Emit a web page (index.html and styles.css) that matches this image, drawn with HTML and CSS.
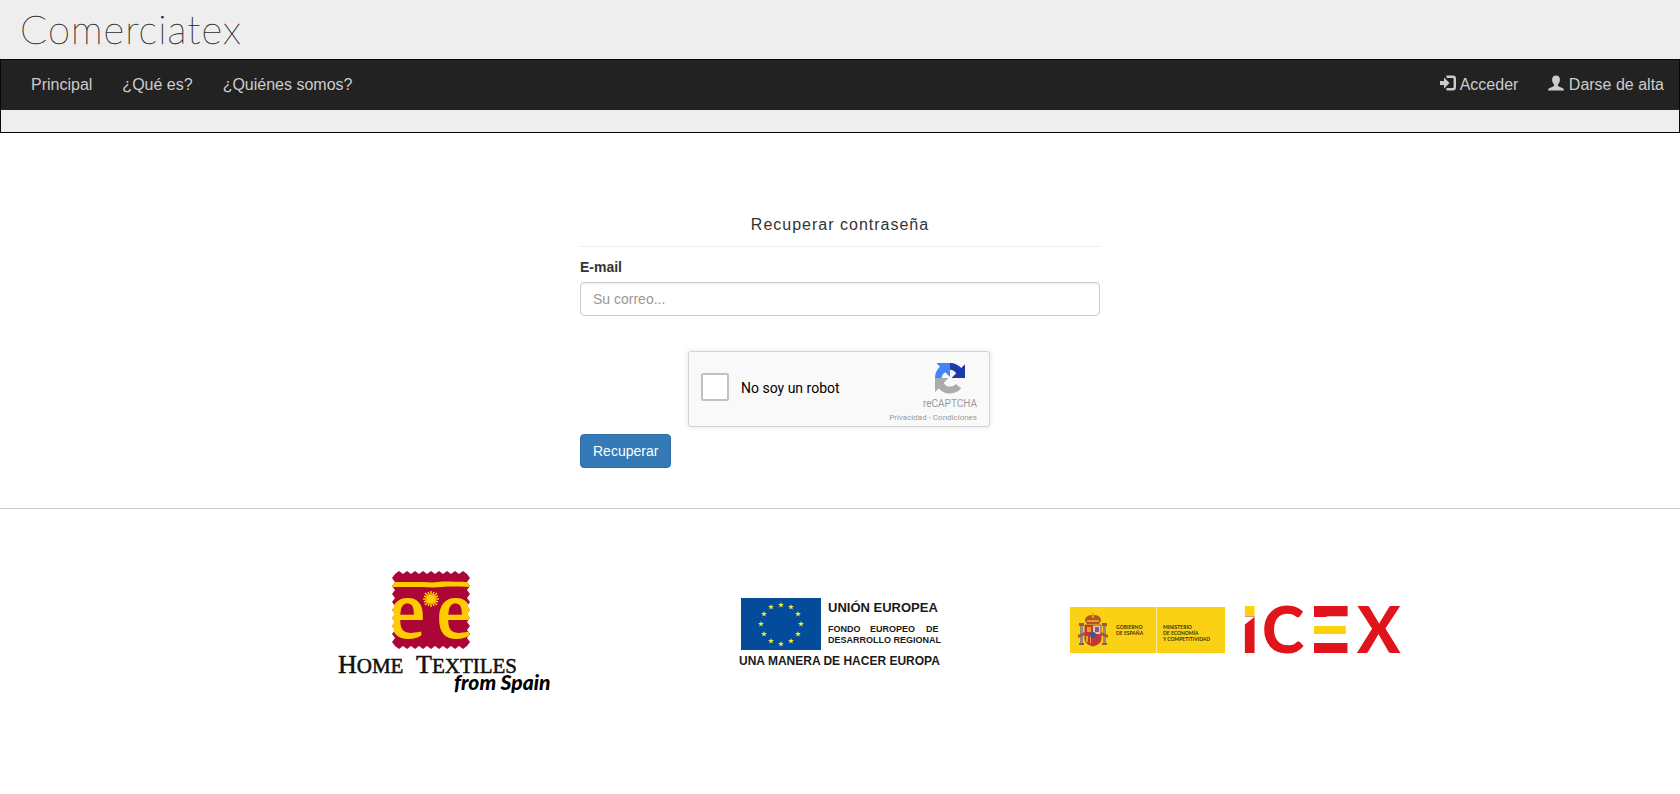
FILE: index.html
```html
<!DOCTYPE html>
<html lang="es">
<head>
    <meta charset="UTF-8">
    <meta name="viewport" content="width=device-width, initial-scale=1.0">
    <title>Comerciatex</title>
    <link rel="stylesheet" href="styles.css">
</head>
<body>
    <header class="cabecera">
        <h1 class="titulo">Comerciatex</h1>
        <div class="menu">
            <nav class="navbar">
                <div class="nav-links">
                    <a href="#">Principal</a>
                    <a href="#">¿Qué es?</a>
                    <a href="#">¿Quiénes somos?</a>
                </div>
                <div class="nav-links">
                    <a href="#"><svg class="icono" viewBox="0 0 16 16" aria-hidden="true">
                        <path fill="currentColor" d="M0 6h4V2.500L9.500 8 4 13.500V10H0z"/>
                        <path fill="none" stroke="currentColor" stroke-width="2.400" d="M6.500 1.700h6.300a2 2 0 0 1 2 2v8.600a2 2 0 0 1-2 2H6.500"/>
                    </svg> Acceder</a>
                    <a href="#"><svg class="icono" viewBox="0 0 17 16" aria-hidden="true">
                        <path fill="currentColor" d="M8.500 0C11 0 12.700 1.600 12.700 4.400c0 2.200-.9 4-2.100 5.200-.4 1 0 1.600 1 2.100l3.600 1.500c1.200.5 1.800 1.300 1.800 2.800H0c0-1.500.6-2.300 1.800-2.800l3.600-1.500c1-.5 1.400-1.100 1-2.100C5.200 8.400 4.300 6.600 4.300 4.400 4.300 1.600 6 0 8.500 0z"/>
                    </svg> Darse de alta</a>
                </div>
            </nav>
        </div>
    </header>

    <main class="contenido">
        <form class="recuperar">
            <h2>Recuperar contraseña</h2>
            <label class="etiqueta" for="email">E-mail</label>
            <input class="campo" type="email" id="email" name="email" placeholder="Su correo...">

            <div class="captcha-caja">
                <div class="captcha">
                    <input type="checkbox" id="robot" name="robot">
                    <label for="robot">No soy un robot</label>
                    <div class="captcha-marca">
                        <svg class="captcha-logo" viewBox="0 0 32 32" aria-hidden="true">
                            <path fill="#1c3aa9" d="M16 1c4.800 0 8.600 2 11.200 5L31 2.200V16H17.500l4.700-4.700C20.800 9.300 18.800 7.700 16 7.700z"/>
                            <path fill="#4285f4" d="M1 16C1 11.200 3 7.400 6 4.800L2.500 1H16v14l-4.700-4.700C9.300 11.700 7.700 13.200 7.700 16z"/>
                            <path fill="#ababab" d="M16 31.500c-4.800 0-8.600-2-11.200-5L1 30V16h13.500l-4.700 4.700c1.400 2.500 3.400 3.900 6.200 3.900 2.600 0 4.300-.7 5.700-2.500l5.500 4.200c-2.700 3.300-6.400 5.200-11.200 5.200z"/>
                        </svg>
                        <span class="captcha-nombre">reCAPTCHA</span>
                        <span class="captcha-legal"><a href="#">Privacidad</a> - <a href="#">Condiciones</a></span>
                    </div>
                </div>
            </div>

            <button class="boton" type="submit">Recuperar</button>
        </form>
    </main>

    <footer class="logos">
        <a href="#">
            <svg width="222" height="126" viewBox="0 0 222 126" role="img" aria-label="Home Textiles from Spain">
                <defs>
                    <clipPath id="sello">
                        <path d="M61 4l4-3 4 3 4-3 4 3 4-3 4 3 4-3 4 3 4-3 4 3 4-3 4 3 4-3 4 3 4-3 4 3 4-3 4 3l3 4-3 4 3 4-3 4 3 4-3 4 3 4-3 4 3 4-3 4 3 4-3 4 3 4-3 4 3 4-3 4 3 4-3 4l-4 3-4-3-4 3-4-3-4 3-4-3-4 3-4-3-4 3-4-3-4 3-4-3-4 3-4-3-4 3-4-3-4 3-4-3l-3-4 3-4-3-4 3-4-3-4 3-4-3-4 3-4-3-4 3-4-3-4 3-4-3-4 3-4-3-4 3-4-3-4z"/>
                    </clipPath>
                </defs>
                <g clip-path="url(#sello)">
                    <rect x="54" width="84" height="80" fill="#ab0635"/>
                    <path fill="#fc0" d="M54 12h32c8 0 10 1 18 0s16 0 34 0v5c-12 0-20-1-30 0s-20 0-26 0H54z"/>
                    <text class="letra-sello" x="55" y="67">e</text>
                    <text class="letra-sello" x="103" y="67">e</text>
                    <circle cx="97" cy="29" r="4" fill="#fc0"/>
                    <path stroke="#fc0" stroke-width="1.500" d="M97 21v16M89 29h16M91 23l12 12M103 23L91 35M94 22l6 14M100 22l-6 14M90 26l14 6M90 32l14-6"/>
                </g>
                <text class="home" x="4" y="103"><tspan class="inicial">H</tspan>OME</text>
                <text class="home" x="82" y="103"><tspan class="inicial">T</tspan>EXTILES</text>
                <text class="spain" x="120" y="120">from Spain</text>
            </svg>
        </a>
        <a href="#">
            <svg width="204" height="70" viewBox="0 0 204 70" role="img" aria-label="Unión Europea">
                <defs>
                    <path id="estrella" fill="#f5e63c" d="M0-3L.7-1H2.900L1.200.4 1.800 2.400 0 1.200-1.800 2.400-1.200.4-2.900-1H-.7z"/>
                </defs>
                <rect x="3" width="80" height="52" fill="#034c9c"/>
                <g transform="translate(43 26)">
                    <use href="#estrella" x="0" y="-19"/>
                    <use href="#estrella" x="10" y="-17"/>
                    <use href="#estrella" x="17" y="-10"/>
                    <use href="#estrella" x="20" y="0"/>
                    <use href="#estrella" x="17" y="10"/>
                    <use href="#estrella" x="10" y="17"/>
                    <use href="#estrella" x="0" y="20"/>
                    <use href="#estrella" x="-10" y="17"/>
                    <use href="#estrella" x="-17" y="10"/>
                    <use href="#estrella" x="-20" y="0"/>
                    <use href="#estrella" x="-17" y="-10"/>
                    <use href="#estrella" x="-10" y="-17"/>
                </g>
                <g class="europa">
                    <text class="union" x="90" y="14">UNIÓN EUROPEA</text>
                    <text class="fondo" x="90" y="34">FONDO</text>
                    <text class="fondo" x="132" y="34">EUROPEO</text>
                    <text class="fondo" x="188" y="34">DE</text>
                    <text class="fondo" x="90" y="45">DESARROLLO REGIONAL</text>
                    <text class="manera" x="1" y="67">UNA MANERA DE HACER EUROPA</text>
                </g>
            </svg>
        </a>
        <a href="#">
            <svg width="334" height="56" viewBox="0 0 334 56" role="img" aria-label="Gobierno de España, ICEX">
                <defs>
                    <linearGradient id="punto" gradientUnits="userSpaceOnUse" x1="0" y1="2" x2="0" y2="48">
                        <stop offset="0.200" stop-color="#fdd20a"/>
                        <stop offset="0.200" stop-color="#e1131b"/>
                    </linearGradient>
                    <linearGradient id="franjas" gradientUnits="userSpaceOnUse" x1="0" y1="2" x2="0" y2="48">
                        <stop offset="0.220" stop-color="#e1131b"/>
                        <stop offset="0.220" stop-color="#fff"/>
                        <stop offset="0.410" stop-color="#fff"/>
                        <stop offset="0.410" stop-color="#fdd20a"/>
                        <stop offset="0.590" stop-color="#fdd20a"/>
                        <stop offset="0.590" stop-color="#fff"/>
                        <stop offset="0.780" stop-color="#fff"/>
                        <stop offset="0.780" stop-color="#e1131b"/>
                    </linearGradient>
                </defs>
                <rect x="2" y="2" width="155" height="46" fill="#fbd116"/>
                <path stroke="#fdeb9a" d="M88.500 2v46"/>
                <!-- escudo -->
                <g>
                    <path fill="#b5512e" d="M17 16c0-5 4-6 8-6s8 1 8 6l-2 3H19z"/>
                    <path fill="#e3a21c" d="M19 15h12v2H19zM24 8h2v5h-2z"/>
                    <path fill="#8d8d86" d="M12 20h3v19h-3zM35 20h3v19h-3z"/>
                    <path fill="#b5512e" d="M11 18h5v3h-5zM34 18h5v3h-5zM10 30l7-3v3l-7 3zM33 27l7 3v3l-7-3zM11 38h5v2h-5zM34 38h5v2h-5z"/>
                    <path fill="#c8343a" d="M17 20h16v14c0 4-4 6-8 7-4-1-8-3-8-7z"/>
                    <path fill="#d9c9c4" d="M25 20h8v9h-8z"/>
                    <path fill="#e8a51b" d="M19 22h4v5h-4zM18 31h2v6h-2zM22 31h1v7h-1z"/>
                    <path fill="#a8497d" d="M27 22h4v5h-4z"/>
                    <circle cx="25" cy="30" r="3" fill="#35589d"/>
                    <path fill="none" stroke="#96502c" d="M17 20h16v14c0 4-4 6-8 7-4-1-8-3-8-7z"/>
                </g>
                <g class="gobierno">
                    <text x="48" y="24">GOBIERNO</text>
                    <text x="48" y="30">DE ESPAÑA</text>
                    <text x="95" y="24">MINISTERIO</text>
                    <text x="95" y="30">DE ECONOMÍA</text>
                    <text x="95" y="36">Y COMPETITIVIDAD</text>
                </g>
                <g class="icex">
                    <text x="172" y="48" fill="url(#punto)">I</text>
                    <path fill="#fff" d="M175 11.500h12L175 21z"/>
                    <text x="194" y="48">C</text>
                    <text class="rayada" x="243" y="48" fill="url(#franjas)">E</text>
                    <text x="289" y="48">X</text>
                </g>
            </svg>
        </a>
    </footer>
</body>
</html>
```
FILE: styles.css
```css
* {
    box-sizing: border-box;
}

body {
    margin: 0;
    background-color: #fff;
    color: #333;
    font-family: "Liberation Sans", Arial, sans-serif;
    font-size: 14px;
    line-height: 20px;
}

.cabecera {
    background-color: #eee;
}

.titulo {
    margin: 0;
    padding: 5px 20px 6px;
    color: #222;
    font-family: Lato, sans-serif;
    font-size: 40px;
    font-weight: 100;
    letter-spacing: 1px;
    line-height: 48px;
    -webkit-text-stroke: 0.4px #333;
}

.menu {
    border: 1px solid #080808;
    padding-bottom: 22px;
}

.navbar {
    display: flex;
    justify-content: space-between;
    padding-left: 15px;
    background-color: #222;
}

.nav-links {
    display: flex;
}

.nav-links a {
    padding: 15px;
    color: #ccc;
    font-size: 16px;
    text-decoration: none;
}

.nav-links a:hover {
    color: #fff;
}

.icono {
    width: 16px;
    height: 16px;
    vertical-align: -1px;
}

/* Formulario */
.contenido {
    padding: 82px 15px 40px;
    border-bottom: 1px solid #ccc;
}

.recuperar {
    max-width: 520px;
    margin: 0 auto;
}

.recuperar h2 {
    margin: 0 0 10px;
    padding-bottom: 11px;
    border-bottom: 1px solid #eee;
    font-size: 16px;
    font-weight: normal;
    letter-spacing: 1px;
    text-align: center;
}

.etiqueta {
    display: block;
    margin-bottom: 5px;
    font-weight: bold;
}

.campo {
    display: block;
    width: 100%;
    height: 34px;
    padding: 6px 12px;
    border: 1px solid #ccc;
    border-radius: 4px;
    box-shadow: inset 0 1px 1px rgba(0, 0, 0, 0.075);
    color: #555;
    font: inherit;
}

.campo::placeholder {
    color: #999;
}

.captcha-caja {
    width: 304px;
    height: 83px;
    margin: 35px auto 0;
}

.captcha {
    display: flex;
    align-items: center;
    width: 302px;
    height: 76px;
    padding: 0 12px;
    background-color: #f9f9f9;
    border: 1px solid #d3d3d3;
    border-radius: 3px;
    box-shadow: 0 0 4px 1px rgba(0, 0, 0, 0.08);
    color: #000;
    font-family: Roboto, sans-serif;
}

.captcha input {
    appearance: none;
    width: 28px;
    height: 28px;
    margin: 0 12px 4px 0;
    background-color: #fff;
    border: 2px solid #c1c1c1;
    border-radius: 2px;
}

.captcha input:checked {
    background-color: #4285f4;
}

.captcha label {
    padding-bottom: 2px;
}

.captcha-marca {
    display: flex;
    flex-direction: column;
    align-items: flex-end;
    margin-left: auto;
    color: #999;
    white-space: nowrap;
}

.captcha-logo {
    width: 32px;
    height: 32px;
    margin: 10px 11px 4px 0;
}

.captcha-nombre {
    font-size: 10px;
    line-height: 12px;
}

.captcha-legal {
    font-size: 8px;
    line-height: 16px;
}

.captcha-legal a {
    color: inherit;
    text-decoration: none;
}

.boton {
    padding: 6px 12px;
    background-color: #337ab7;
    border: 1px solid #2e6da4;
    border-radius: 4px;
    color: #fff;
    font: inherit;
    cursor: pointer;
}

.boton:hover {
    background-color: #286090;
}

/* Logos del pie */
.logos {
    display: grid;
    grid-template-columns: repeat(3, 1fr);
    align-items: center;
    justify-items: center;
    max-width: 1185px;
    margin: 0 auto;
    padding: 61px 0;
}

.logos svg {
    display: block;
    max-width: 100%;
}

.letra-sello {
    fill: #fc0;
    font-family: "Liberation Serif", serif;
    font-size: 80px;
    stroke: #fc0;
    stroke-width: 2px;
}

.home {
    fill: #111;
    font-family: "Liberation Serif", serif;
    font-size: 21px;
    stroke: #111;
    stroke-width: 0.5px;
}

.inicial {
    font-size: 26px;
}

.spain {
    fill: #000;
    font-family: Lato, sans-serif;
    font-size: 21px;
    font-style: italic;
    font-weight: 900;
}

.europa {
    fill: #1a1a1a;
    font-weight: bold;
}

.union {
    font-size: 13px;
}

.fondo {
    font-size: 9px;
}

.manera {
    font-size: 12px;
}

.gobierno {
    fill: #3c3210;
    font-family: Lato, sans-serif;
    font-size: 5px;
    font-weight: bold;
}

.icex {
    fill: #e1131b;
    font-family: Lato, sans-serif;
    font-size: 64px;
    font-weight: 900;
}

.rayada {
    font-family: Inter, sans-serif;
}

@media (max-width: 900px) {
    .logos {
        grid-template-columns: 1fr;
        gap: 30px;
    }
}
```
